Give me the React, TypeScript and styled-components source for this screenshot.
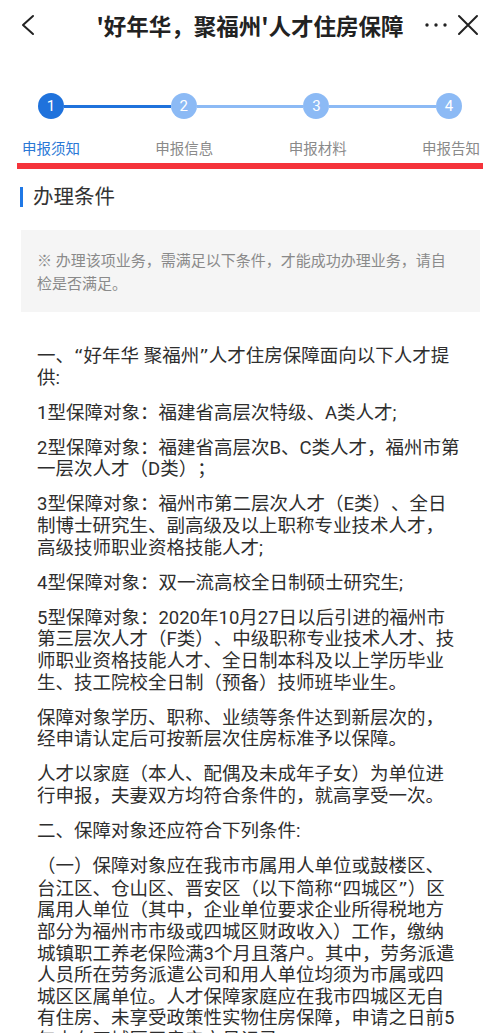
import { Fragment } from "react";
import styled, { createGlobalStyle } from "styled-components";

const GlobalStyle = createGlobalStyle`
  body {
    margin: 0;
    background: #fff;
    font-family: Roboto, "Noto Sans CJK SC", sans-serif;
    color: #2e2e2e;
    text-spacing-trim: space-all;
  }
`;

const Page = styled.div`
  width: 500px;
`;

const Header = styled.header`
  height: 50px;
  display: grid;
  grid-template-columns: 1fr auto 1fr;
  align-items: center;
`;

const IconButton = styled.button`
  background: none;
  border: 0;
  padding: 0;
  display: flex;
  align-items: center;
  justify-content: center;
  color: #222;
  cursor: pointer;
`;

const HeaderLeft = styled.div`
  display: flex;
  padding-left: 18px;
`;

const HeaderRight = styled.div`
  display: flex;
  align-items: center;
  justify-content: flex-end;
  gap: 9px;
  padding-right: 20px;
`;

const Title = styled.h1`
  margin: 0;
  font-family: "Noto Sans CJK SC", sans-serif;
  font-size: 22.5px;
  font-weight: 700;
  color: #222;
  white-space: nowrap;
`;

const StepTrack = styled.div`
  display: flex;
  align-items: center;
  padding: 43px 38px 0;
`;

const StepDot = styled.div<{ $active?: boolean }>`
  width: 26px;
  height: 26px;
  flex-shrink: 0;
  border-radius: 50%;
  background: ${(p) => (p.$active ? "#1f72dc" : "#8cbaf5")};
  color: #fff;
  font-size: 15px;
  display: flex;
  align-items: center;
  justify-content: center;
`;

const StepLine = styled.div<{ $active?: boolean }>`
  flex: 1;
  height: 3px;
  background: ${(p) => (p.$active ? "#1f72dc" : "#8cbaf5")};
`;

const StepLabels = styled.div`
  display: flex;
  justify-content: space-between;
  padding: 0 20px 0 22px;
  margin-top: 21px;
`;

const StepLabel = styled.span<{ $active?: boolean }>`
  font-size: 14.5px;
  line-height: 20px;
  color: ${(p) => (p.$active ? "#2a78d6" : "#8a8a8a")};
`;

const ActiveBar = styled.div`
  height: 6px;
  margin: 3px 17px 0;
  background: #f5333b;
`;

const SectionTitle = styled.h2`
  display: flex;
  align-items: center;
  gap: 10px;
  margin: 16px 0 0;
  padding-left: 20px;
  font-size: 20.5px;
  line-height: 24px;
  font-weight: 400;
  color: #333;

  &::before {
    content: "";
    width: 3px;
    height: 20px;
    background: #1f78e6;
  }
`;

const Notice = styled.div`
  margin: 21px 20px 0 21px;
  padding: 20px 30px 16px 16px;
  background: #f5f5f5;
  font-size: 15px;
  line-height: 23px;
  color: #8a8a8a;
`;

const Body = styled.div`
  padding: 33px 39px 24px 37px;
  font-size: 18.5px;
  line-height: 21.6px;
  color: #2e2e2e;
`;

const Para = styled.p`
  margin: 0 0 13.5px;
`;

// curly quotes drawn a little wider, as on the phone
const Q = styled.q`
  quotes: "“" "”";

  &::before,
  &::after {
    font-family: "DejaVu Sans", sans-serif;
  }
`;

const steps = ["申报须知", "申报信息", "申报材料", "申报告知"];

export default function App() {
  return (
    <Page>
      <GlobalStyle />
      <Header>
        <HeaderLeft>
          <IconButton aria-label="返回">
            <svg width="20" height="24" viewBox="0 0 20 24" fill="none">
              <polyline
                points="15,3 5,12 15,21"
                stroke="currentColor"
                strokeWidth="2"
                strokeLinecap="round"
                strokeLinejoin="round"
              />
            </svg>
          </IconButton>
        </HeaderLeft>
        <Title>'好年华，聚福州'人才住房保障</Title>
        <HeaderRight>
          <IconButton aria-label="更多">
            <svg width="22" height="6" viewBox="0 0 22 6">
              <circle cx="2" cy="3" r="1.7" fill="currentColor" />
              <circle cx="11" cy="3" r="1.7" fill="currentColor" />
              <circle cx="20" cy="3" r="1.7" fill="currentColor" />
            </svg>
          </IconButton>
          <IconButton aria-label="关闭">
            <svg width="24" height="24" viewBox="0 0 24 24" fill="none">
              <path
                d="M3 3L21 21M21 3L3 21"
                stroke="currentColor"
                strokeWidth="2"
                strokeLinecap="round"
              />
            </svg>
          </IconButton>
        </HeaderRight>
      </Header>

      <StepTrack>
        {steps.map((s, i) => (
          <Fragment key={s}>
            {i > 0 && <StepLine $active={i === 1} />}
            <StepDot $active={i === 0}>{i + 1}</StepDot>
          </Fragment>
        ))}
      </StepTrack>
      <StepLabels>
        {steps.map((s, i) => (
          <StepLabel key={s} $active={i === 0}>
            {s}
          </StepLabel>
        ))}
      </StepLabels>
      <ActiveBar />

      <SectionTitle>办理条件</SectionTitle>
      <Notice>※ 办理该项业务，需满足以下条件，才能成功办理业务，请自检是否满足。</Notice>

      <Body>
        <Para>
          一、<Q>好年华 聚福州</Q>人才住房保障面向以下人才提供:
        </Para>
        <Para>1型保障对象：福建省高层次特级、A类人才;</Para>
        <Para>2型保障对象：福建省高层次B、C类人才，福州市第一层次人才（D类）；</Para>
        <Para>
          3型保障对象：福州市第二层次人才（E类）、全日制博士研究生、副高级及以上职称专业技术人才，高级技师职业资格技能人才;
        </Para>
        <Para>4型保障对象：双一流高校全日制硕士研究生;</Para>
        <Para>
          5型保障对象：2020年10月27日以后引进的福州市第三层次人才（F类）、中级职称专业技术人才、技师职业资格技能人才、全日制本科及以上学历毕业生、技工院校全日制（预备）技师班毕业生。
        </Para>
        <Para>保障对象学历、职称、业绩等条件达到新层次的，经申请认定后可按新层次住房标准予以保障。</Para>
        <Para>人才以家庭（本人、配偶及未成年子女）为单位进行申报，夫妻双方均符合条件的，就高享受一次。</Para>
        <Para>二、保障对象还应符合下列条件:</Para>
        <Para>
          （一）保障对象应在我市市属用人单位或鼓楼区、台江区、仓山区、晋安区（以下简称<Q>四城区</Q>）区属用人单位（其中，企业单位要求企业所得税地方部分为福州市市级或四城区财政收入）工作，缴纳城镇职工养老保险满3个月且落户。其中，劳务派遣人员所在劳务派遣公司和用人单位均须为市属或四城区区属单位。人才保障家庭应在我市四城区无自有住房、未享受政策性实物住房保障，申请之日前5年内在四城区无房产交易记录。
        </Para>
      </Body>
    </Page>
  );
}
